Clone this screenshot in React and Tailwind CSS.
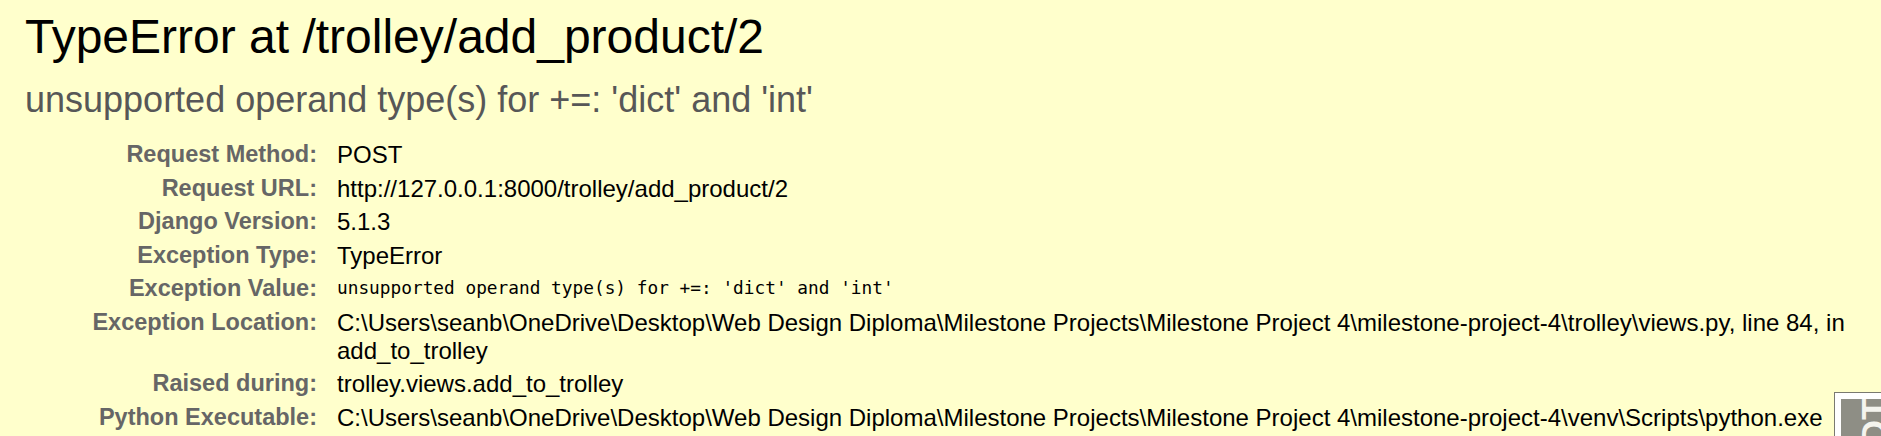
const rows = [
  { label: "Request Method:", value: "POST" },
  { label: "Request URL:", value: "http://127.0.0.1:8000/trolley/add_product/2" },
  { label: "Django Version:", value: "5.1.3" },
  { label: "Exception Type:", value: "TypeError" },
  { label: "Exception Value:", value: "unsupported operand type(s) for +=: 'dict' and 'int'", mono: true },
  {
    label: "Exception Location:",
    value:
      "C:\\Users\\seanb\\OneDrive\\Desktop\\Web Design Diploma\\Milestone Projects\\Milestone Project 4\\milestone-project-4\\trolley\\views.py, line 84, in add_to_trolley",
  },
  { label: "Raised during:", value: "trolley.views.add_to_trolley" },
  {
    label: "Python Executable:",
    value:
      "C:\\Users\\seanb\\OneDrive\\Desktop\\Web Design Diploma\\Milestone Projects\\Milestone Project 4\\milestone-project-4\\venv\\Scripts\\python.exe",
  },
];

function ToolbarHandle() {
  return (
    <div className="absolute left-[1834px] top-[392px] w-[47px] h-[60px] border-l border-t border-[#7a7a70] bg-white pl-[6px] pt-[6px]">
      <div className="h-full w-full bg-[#8e8e85] overflow-hidden">
        <div className="ml-[7px] [writing-mode:vertical-rl] rotate-180 text-[35px] font-bold text-[#f4f4ee] leading-normal h-[91px] text-left">
          DJDT
        </div>
      </div>
    </div>
  );
}

export default function App() {
  return (
    <div className="relative h-[436px] overflow-hidden bg-[#ffffcc] font-['Liberation_Sans',Arial,sans-serif]">
      {/* Summary */}
      <div className="pl-[25px] pt-[9px] pr-[4px]">
        <h1 className="text-[48px] leading-[55px] font-normal text-black">
          TypeError at /trolley/add_product/2
        </h1>
        <div className="mt-[15px] text-[36px] leading-[41px] text-[#575757] whitespace-pre-wrap">
          unsupported operand type(s) for +=: 'dict' and 'int'
        </div>
        <div className="mt-[18px] grid grid-cols-[292px_1fr] gap-x-[20px]">
          {rows.map((r) => (
            <div key={r.label} className="contents">
              <div className="py-[3px] text-right text-[23.5px] leading-[27.6px] font-bold text-[#666666]">
                {r.label}
              </div>
              <div className="py-[3px] text-[24px] leading-[27.6px] text-black">
                {r.mono ? (
                  <div className="mt-[2px] font-['DejaVu_Sans_Mono',monospace] text-[17.8px] leading-[21px] whitespace-pre-wrap">
                    {r.value}
                  </div>
                ) : (
                  r.value
                )}
              </div>
            </div>
          ))}
        </div>
      </div>
      <ToolbarHandle />
    </div>
  );
}
